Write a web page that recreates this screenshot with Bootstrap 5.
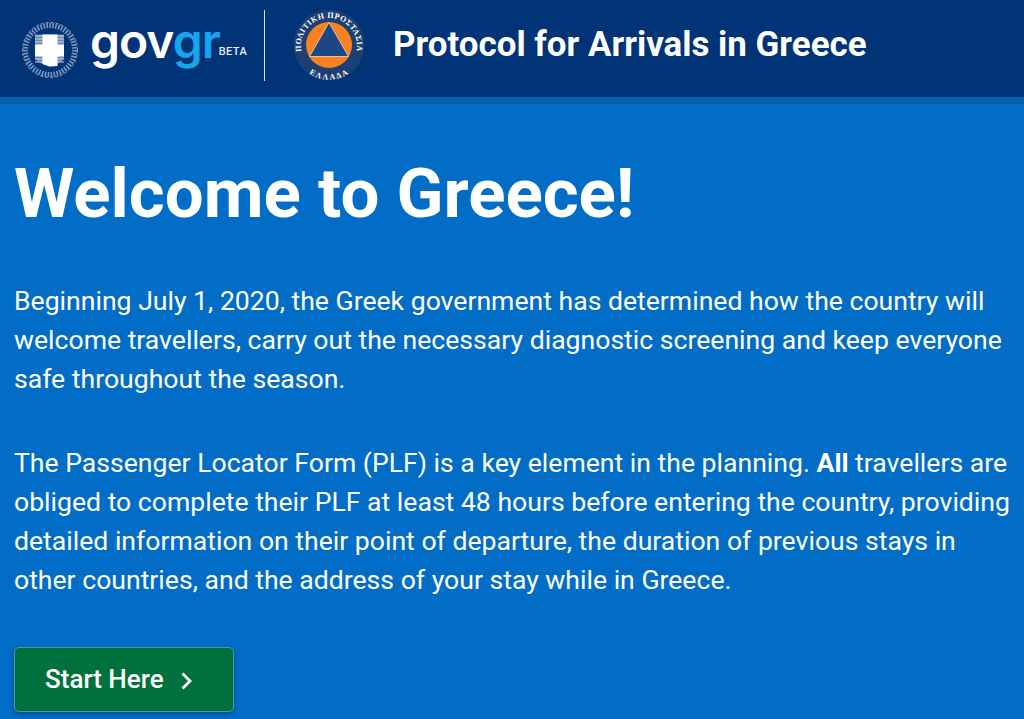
<!DOCTYPE html>
<html lang="en">
<head>
<meta charset="utf-8">
<title>Protocol for Arrivals in Greece</title>
<link href="https://cdn.jsdelivr.net/npm/bootstrap@5.3.0/dist/css/bootstrap.min.css" rel="stylesheet">
<style>
html,body{height:100%;overflow:hidden}
body{background:#026dc6;font-family:Roboto,"Liberation Sans",sans-serif;color:#fff}
.hdr{height:104px;background:#003476;border-bottom:7px solid #0360ad;padding:0 0 7px 21px}
.emblem{width:58px;height:58px;flex:none;margin-top:9px}
.wordmark{font-family:Inter,Roboto,sans-serif;font-weight:600;font-size:48px;line-height:1;letter-spacing:-1px;margin-left:11px;margin-top:-9px}
.wordmark .gr{color:#17a5ee}
.betatag{font-size:11px;font-weight:500;margin-left:-1px;letter-spacing:.4px;margin-top:21px;font-family:Roboto,sans-serif;color:#e6edf5}
.sep{width:1px;height:71px;background:#d5dfea;margin:0 28px 0 17px;flex:none}
.cp{width:72px;height:72px;flex:none}
.hdr-title{font-size:34.900px;font-weight:700;margin:0 0 0 28px;line-height:1.2;color:#fff}
.pagebody{padding:0 14px}
.bigtitle{font-size:69px;font-weight:700;line-height:1.2;margin:49px 0 0;color:#fff}
.para{font-size:26.600px;line-height:39px;margin:45px 0 0}
.para + .para{margin-top:45px}
.startbtn{display:inline-flex;align-items:center;width:220px;height:65px;margin-top:48px;padding:0 0 0 30px;background:#00703c;border:1px solid #5b8ea8;border-radius:5px;color:#fff;font-size:26px;font-weight:500;box-shadow:0 2px 4px rgba(0,0,0,.25)}
.startbtn:hover{background:#00703c;color:#fff;border-color:#5b8ea8}
.startbtn svg{margin-left:16px;margin-top:3px}
</style>
</head>
<body>
<header class="hdr d-flex align-items-center">
  <svg class="emblem" viewBox="0 0 58 58" aria-hidden="true">
    <circle cx="29" cy="29" r="24.500" fill="none" stroke="#7f98bc" stroke-width="5" stroke-dasharray="1.600 1.400"/>
    <circle cx="29" cy="29" r="27.500" fill="none" stroke="#aebfd6" stroke-width=".8" stroke-dasharray="3 2"/>
    <path d="M14 13.500h29v23q0 5-14.500 9q-14.500-4-14.500-9z" fill="#6f8ab0"/>
    <path d="M14 15h29M14 18h29M14 21h29M14 38h29M14 41h29" stroke="#c5d1e2" stroke-width="1.200"/>
    <path d="M21.500 13.500h15v10H43v12H36.500v9.500l-8 .5-7-2.500V35.500H14v-12h7.500z" fill="#fff"/>
  </svg>
  <div class="wordmark d-flex align-items-center"><span>gov<span class="gr">gr</span></span><span class="betatag">BETA</span></div>
  <div class="sep"></div>
  <svg class="cp" viewBox="0 0 72 72" aria-hidden="true">
    <defs>
      <path id="arcTop" d="M9.500 46A28 28 0 1 1 62.500 46"/>
      <path id="arcBot" d="M12 53A29 29 0 0 0 60 53"/>
    </defs>
    <circle cx="36" cy="36" r="35.500" fill="#1c3f74"/>
    <circle cx="36" cy="36" r="23" fill="#f5821f"/>
    <path d="M36 13.500 55.500 47.500H16.500z" fill="#1c4684" stroke="#f9d9b5" stroke-width=".8"/>
    <text font-family="Liberation Serif,serif" font-size="8" font-weight="700" fill="#fff" letter-spacing=".45"><textPath href="#arcTop" startOffset="50%" text-anchor="middle">ΠΟΛΙΤΙΚΗ ΠΡΟΣΤΑΣΙΑ</textPath></text>
    <text font-family="Liberation Serif,serif" font-size="8" font-weight="700" fill="#fff" letter-spacing=".6" dy="5"><textPath href="#arcBot" startOffset="50%" text-anchor="middle">ΕΛΛΑΔΑ</textPath></text>
  </svg>
  <h1 class="hdr-title">Protocol for Arrivals in Greece</h1>
</header>
<main class="pagebody">
  <h2 class="bigtitle">Welcome to Greece!</h2>
  <p class="para">Beginning July 1, 2020, the Greek government has determined how the country will welcome travellers, carry out the necessary diagnostic screening and keep everyone safe throughout the season.</p>
  <p class="para">The Passenger Locator Form (PLF) is a key element in the planning. <strong>All</strong> travellers are obliged to complete their PLF at least 48 hours before entering the country, providing detailed information on their point of departure, the duration of previous stays in other countries, and the address of your stay while in Greece.</p>
  <a href="#" class="btn startbtn">Start Here
    <svg width="14" height="20" viewBox="0 0 14 20" aria-hidden="true"><path d="M2.500 2.500l7.500 7.500-7.500 7.500" fill="none" stroke="#fff" stroke-width="2.800"/></svg>
  </a>
</main>
<script src="https://cdn.jsdelivr.net/npm/bootstrap@5.3.0/dist/js/bootstrap.bundle.min.js"></script>
</body>
</html>
